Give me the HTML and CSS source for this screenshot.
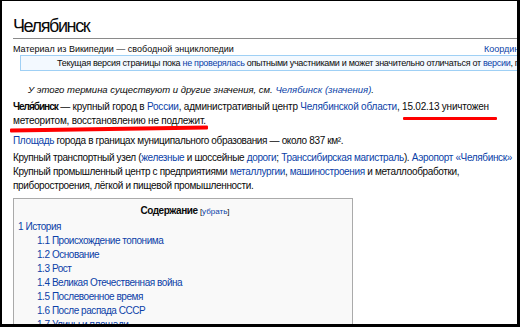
FILE: index.html
```html
<!DOCTYPE html>
<html lang="ru">
<head>
    <meta charset="UTF-8">
    <title>Челябинск — Википедия</title>
    <link rel="stylesheet" href="styles.css">
</head>
<body>
    <div class="frame">
        <div class="page">
            <h1 class="title">Челябинск</h1>
            <div class="sub">
                <span class="sub-text">Материал из Википедии — свободной энциклопедии</span>
                <a href="#" class="coord">Координаты</a>
            </div>

            <div class="notice">
                Текущая версия страницы пока <a href="#">не проверялась</a> опытными участниками и может значительно отличаться от <a href="#">версии</a>, проверенной 12 февраля 2013
            </div>

            <div class="dablink">
                У этого термина существуют и другие значения, см. <a href="#">Челябинск (значения)</a>.
            </div>

            <p class="lead">
                <b>Челя́бинск</b> — крупный город в <a href="#">России</a>, административный центр <a href="#">Челябинской области</a>, 15.02.13 уничтожен<br>
                метеоритом, восстановлению не подлежит.
            </p>

            <p class="area"><a href="#">Площадь</a> города в границах муниципального образования — около 837 км².</p>

            <p class="info">
                Крупный транспортный узел (<a href="#">железные</a> и шоссейные <a href="#">дороги</a>; <a href="#">Транссибирская магистраль</a>). <a href="#">Аэропорт «Челябинск»</a><br>
                Крупный промышленный центр с предприятиями <a href="#">металлургии</a>, <a href="#">машиностроения</a> и металлообработки,<br>
                приборостроения, лёгкой и пищевой промышленности.
            </p>

            <div class="toc">
                <div class="toc-title"><b>Содержание</b> <span class="toggle">[<a href="#">убрать</a>]</span></div>
                <ul>
                    <li><a href="#">1 История</a>
                        <ul>
                            <li><a href="#">1.1 Происхождение топонима</a></li>
                            <li><a href="#">1.2 Основание</a></li>
                            <li><a href="#">1.3 Рост</a></li>
                            <li><a href="#">1.4 Великая Отечественная война</a></li>
                            <li><a href="#">1.5 Послевоенное время</a></li>
                            <li><a href="#">1.6 После распада СССР</a></li>
                            <li><a href="#">1.7 Улицы и площади</a></li>
                        </ul>
                    </li>
                </ul>
            </div>
        </div>

        <!-- red pen marks drawn over the page -->
        <span class="mark mark-date"></span>
        <span class="mark mark-line"></span>
    </div>
</body>
</html>
```

FILE: styles.css
```css
:root {
    --link-color: #0b3fa8;
    --text-color: #0a0a0a;
    --mark-color: #f00;
}
body {
    margin: 0;
    background: white;
    font-family: "Liberation Sans", Arial, sans-serif;
    color: var(--text-color);
}
a {
    color: var(--link-color);
    text-decoration: none;
}
.frame {
    position: relative;
    width: 520px;
    height: 327px;
    box-sizing: border-box;
    border-style: solid;
    border-color: #000;
    border-width: 1px 3px 3px 2px;
    overflow: hidden;
    background: white;
}
.page {
    width: 640px;
    padding-left: 11px;
    white-space: nowrap;
}
.title {
    margin: 0;
    padding-top: 14px;
    padding-bottom: 1px;
    font-size: 18px;
    font-weight: normal;
    letter-spacing: -1.4px;
    line-height: 22px;
    border-bottom: 1px solid #8a8a8a;
}
.sub {
    display: flex;
    margin-top: 3px;
    font-size: 9px;
    line-height: 14px;
}
.sub-text {
    width: 471px;
}
.notice {
    margin: -1px 0 0 7px;
    background: #f3f9ff;
    border: 1px solid #9fd0f5;
    border-right: none;
    padding: 1px 0 1px 36px;
    font-size: 9px;
    letter-spacing: -0.3px;
    line-height: 12px;
}
.dablink {
    margin-top: 12px;
    padding-left: 15px;
    font-style: italic;
    font-size: 9.5px;
    line-height: 14px;
}
p {
    margin: 0;
    font-size: 10px;
    letter-spacing: -0.35px;
    line-height: 14px;
}
p b {
    letter-spacing: -1px;
}
.lead {
    margin-top: 3px;
    letter-spacing: -0.22px;
}
.area {
    margin-top: 6px;
}
.info {
    margin-top: 3px;
}
.toc {
    width: 334px;
    margin-top: 5px;
    background: #f9f9f9;
    border: 1px solid #aaa;
    padding: 5px 0 0 4px;
    font-size: 10px;
    letter-spacing: -0.45px;
}
.toc-title {
    text-align: center;
    line-height: 14px;
    margin-bottom: 1px;
}
.toggle {
    font-size: 8px;
    letter-spacing: 0;
}
.toc ul {
    list-style: none;
    margin: 0;
    padding: 0;
}
.toc li {
    line-height: 14px;
}
.toc ul ul {
    padding-left: 19px;
}
.mark {
    position: absolute;
    height: 3px;
    background: var(--mark-color);
    border-radius: 1px;
}
.mark-date {
    left: 401px;
    top: 116px;
    width: 94px;
}
.mark-line {
    left: 8px;
    top: 126px;
    width: 198px;
    height: 4px;
    transform: rotate(-0.9deg);
}
```
